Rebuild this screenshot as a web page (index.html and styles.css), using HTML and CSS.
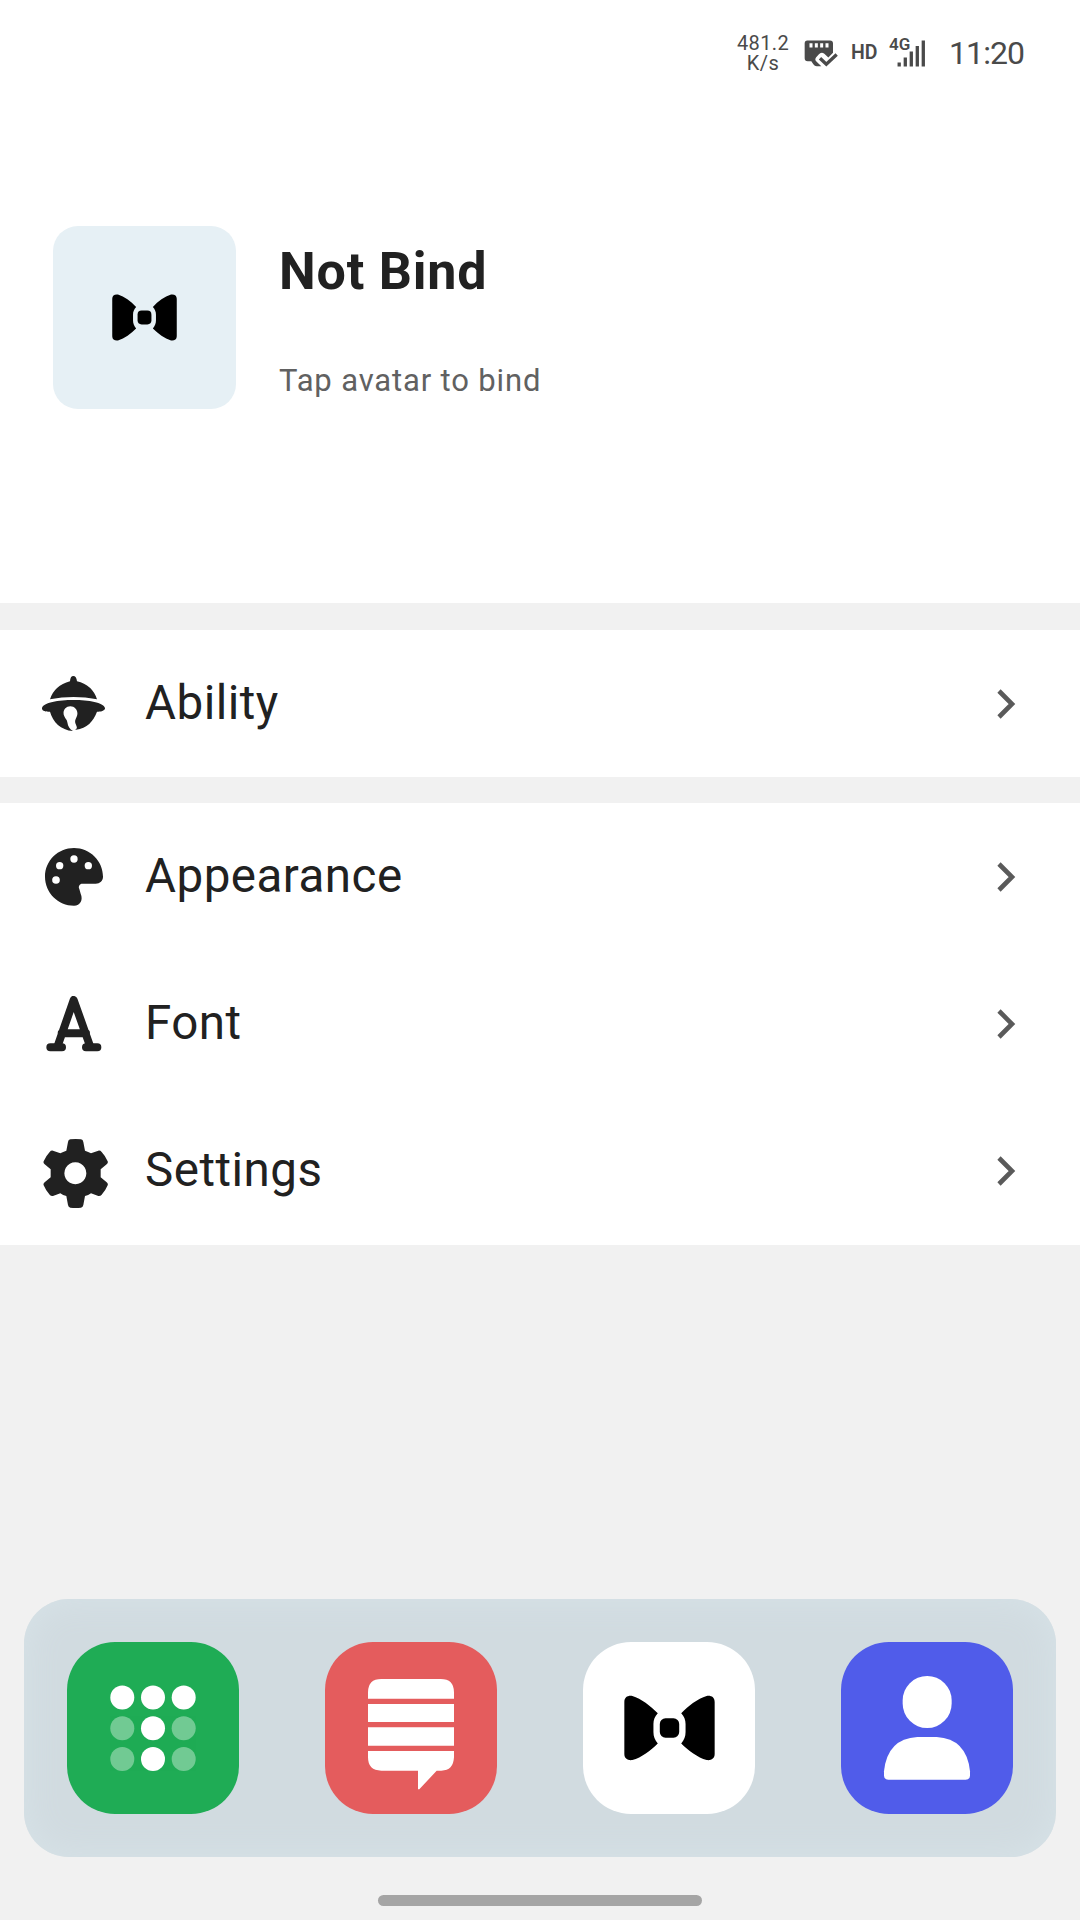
FILE: index.html
```html
<!DOCTYPE html>
<html lang="en">
<head>
<meta charset="UTF-8">
<title>Profile</title>
<link rel="stylesheet" href="styles.css">
</head>
<body>
<!-- shared icons -->
<svg class="defs" width="0" height="0">
  <symbol id="bow" viewBox="192 287 272 196">
    <path d="M193 307c0-14 10-20 24-18 27 9 53 28 76 52-9 10-13 20-13 32v24c0 13 4 24 13 34-22 22-48 41-76 50-13 2-24-4-24-18z"/>
    <path d="M463 307c0-14-10-20-24-18-27 9-54 28-76 52 9 10 13 20 13 32v24c0 13-4 24-13 34 22 22 49 41 76 50 13 2 24-4 24-18z"/>
    <rect x="299" y="356" width="58" height="58" rx="17"/>
  </symbol>
  <symbol id="arrow" viewBox="0 0 20 32">
    <path d="M3 3l13 13L3 29" fill="none" stroke="#5a5a5a" stroke-width="4.6"/>
  </symbol>
</svg>
<div class="page">
  <header class="profile">
    <div class="status">
      <div class="speed"><div>481.2</div><div>K/s</div></div>
      <svg class="card" viewBox="250 57 102 80">
        <path d="M260 58h68q9 0 9 9v28l-14 14-12-11q-9-7-17 2l-8 9q-5 7 2 13l14 13h-14q-6 0-10-6l-6-9h-11q-9 0-9-9V67q0-9 8-9z" fill="#4a4a4a"/>
        <path d="M271 66v13M287 66v13M303 66v13M319 66v13" stroke="#fff" stroke-width="9"/>
        <path d="M298 111l19 18 31-29" fill="none" stroke="#4a4a4a" stroke-width="10"/>
      </svg>
      <div class="hd">HD</div>
      <div class="signal">
        <span class="net">4G</span>
        <svg class="bars" viewBox="0 0 28 27"><path d="M2.2 22.5v4M8.3 17.5v9M14.3 11.5v15M20.3 6v20.5M26.3 0.500v26" fill="none" stroke="#4a4a4a" stroke-width="3.300"/></svg>
      </div>
      <div class="time">11:20</div>
    </div>
    <div class="user">
      <div class="avatar"><svg width="65" height="47"><use href="#bow"/></svg></div>
      <div class="info">
        <h1>Not Bind</h1>
        <p>Tap avatar to bind</p>
      </div>
    </div>
  </header>

  <!-- menu -->
  <section class="group">
    <div class="row">
      <svg class="icon" width="63" height="55" viewBox="36 258 189 165">
        <path d="M60 328q13-41 60-54 1-16 10-16t11 16q46 11 60 54-70-14-141 0z"/>
        <path fill-rule="evenodd" d="M36 354c8-32 181-32 189 0 1 8-11 12-24 11-11 29-30 50-63 54l-3 0c9-4 5-9 2-17-4-9 0-15 3-22 7-14-3-31-19-31s-25 16-18 30c3 8 8 10 9 18 2 13 7 21 17 26-37-3-60-27-69-58-14 0-25-3-24-11z"/>
      </svg>
      <span class="label">Ability</span>
      <svg class="arrow"><use href="#arrow"/></svg>
    </div>
  </section>
  <section class="group">
    <div class="row">
      <svg class="icon" width="58" height="58" viewBox="44 203 174 174">
        <path fill-rule="evenodd" d="M131 203c48 0 87 39 87 86 0 12-9 21-22 21h-40c-8 0-13 8-9 16l4 14c8 18-1 36-20 36-48 0-87-39-87-87s39-86 87-86z"/>
        <g fill="#fff"><circle cx="131" cy="236" r="11"/><circle cx="88" cy="256" r="11"/><circle cx="174" cy="256" r="11"/><circle cx="77" cy="299" r="11.500"/></g>
      </svg>
      <span class="label">Appearance</span>
      <svg class="arrow"><use href="#arrow"/></svg>
    </div>
    <div class="row">
      <svg class="icon" width="56" height="56" viewBox="47 47 168 168">
        <g fill="none" stroke="#212121" stroke-width="24" stroke-linecap="round" stroke-linejoin="round">
          <path d="M82 197l48-138 49 138M94 159h73"/>
          <path d="M60 201h35M167 201h34"/>
        </g>
      </svg>
      <span class="label">Font</span>
      <svg class="arrow"><use href="#arrow"/></svg>
    </div>
    <div class="row">
      <svg class="icon gear" width="65" height="69" viewBox="41 477 195 207">
        <path fill-rule="evenodd" d="M123 478q16-2 32 0 6 1 7 8l5 26q10 4 18 8l22-8q6-1 10 4 12 13 18 28 2 5-3 9l-18 15v24l18 15q5 4 3 9-6 15-18 28-4 5-10 4l-22-8q-8 6-18 8l-5 27q-1 7-7 8-16 2-32 0-6-1-7-8l-5-27q-10-2-18-8l-22 8q-6 1-10-4-12-13-18-28-2-5 3-9l18-15v-24l-18-15q-5-4-3-9 6-15 18-28 4-5 10-4l22 8q8-4 18-8l5-26q1-7 7-8zM138 547a33 33 0 1 0 .1 0z"/>
      </svg>
      <span class="label">Settings</span>
      <svg class="arrow"><use href="#arrow"/></svg>
    </div>
  </section>

  <!-- bottom dock -->
  <nav class="dock">
    <div class="app green">
      <svg viewBox="0 0 172 172" fill="#fff">
        <circle cx="55.300" cy="55.500" r="12"/><circle cx="86" cy="55.500" r="12"/><circle cx="116.700" cy="55.500" r="12"/>
        <circle cx="86" cy="86.200" r="12"/><circle cx="86" cy="117" r="12"/>
        <g opacity=".37"><circle cx="55.300" cy="86.200" r="12"/><circle cx="116.700" cy="86.200" r="12"/><circle cx="55.300" cy="117" r="12"/><circle cx="116.700" cy="117" r="12"/></g>
      </svg>
    </div>
    <div class="app red">
      <svg viewBox="75 126 516 516" fill="#fff">
        <path d="M204 296v-19q0-40 40-40h178q40 0 40 40v19zM204 312h258v54H204zM204 382h258v55H204zM204 453h258v19q-2 40-38 40h-14l-52 56h-4v-56H244q-40 0-40-40z"/>
      </svg>
    </div>
    <div class="app white"><svg class="tie"><use href="#bow"/></svg></div>
    <div class="app blue">
      <svg viewBox="93 186 516 516" fill="#fff">
        <rect x="278" y="288" width="147" height="156" rx="73.500"/>
        <path d="M222 586v-12q10-98 100-103h58q90 5 100 103v12q0 13-13 13H235q-13 0-13-13z"/>
      </svg>
    </div>
  </nav>
  <div class="home"></div>
</div>
</body>
</html>
```
FILE: styles.css
```css
* {
	box-sizing: border-box;
}
body {
	margin: 0;
	background-color: #f1f1f1;
	font-family: Roboto, "Liberation Sans", sans-serif;
	color: #212121;
}
.defs {
	display: block;
}
svg {
	display: block;
	flex: none;
}
.page {
	height: 1920px;
	display: flex;
	flex-direction: column;
	overflow: hidden;
}
.profile {
	height: 603px;
	background-color: #fff;
}
/*状态栏*/
.status {
	height: 106px;
	padding-right: 54px;
	display: flex;
	justify-content: flex-end;
	align-items: center;
	color: #4a4a4a;
}
.speed {
	width: 54px;
	text-align: center;
	font-size: 20px;
	line-height: 19.5px;
	letter-spacing: 0.4px;
	margin-top: 1px;
	margin-right: 14px;
}
.card {
	width: 34px;
	height: 27px;
	margin-right: 13px;
}
.hd {
	width: 28px;
	font-size: 19.5px;
	font-weight: 600;
	margin-top: -2px;
	margin-right: 10px;
}
.signal {
	width: 38px;
	height: 30px;
	position: relative;
	margin-right: 22px;
}
.net {
	position: absolute;
	left: 0;
	top: -2px;
	font-size: 17px;
	line-height: 16px;
	font-weight: 600;
}
.bars {
	position: absolute;
	left: 8px;
	top: 2px;
	width: 28px;
	height: 27px;
}
.time {
	width: 77px;
	font-size: 32px;
	letter-spacing: -0.9px;
	white-space: nowrap;
}
/*用户信息*/
.user {
	display: flex;
	padding: 120px 53px 0;
}
.avatar {
	width: 183px;
	height: 183px;
	border-radius: 25px;
	background-color: #e6f0f5;
	display: flex;
	align-items: center;
	justify-content: center;
}
.info {
	margin-left: 43px;
}
.info h1 {
	margin: 15px 0 0;
	font-size: 52px;
	line-height: 61px;
	font-weight: 700;
	letter-spacing: 0.8px;
}
.info p {
	margin: 60px 0 0;
	font-size: 31px;
	line-height: 37px;
	letter-spacing: 0.85px;
	color: #616161;
}
/*菜单*/
.group {
	margin-top: 27px;
	background-color: #fff;
}
.group + .group {
	margin-top: 26px;
}
.row {
	height: 147px;
	display: grid;
	grid-template-columns: 145px 1fr 84px;
	align-items: center;
}
.group + .group .row {
	height: 147.3px;
}
.icon {
	justify-self: center;
	margin-left: 2px;
	fill: #212121;
}
.gear {
	margin-top: 4px;
	margin-left: 6px;
}
.label {
	margin-top: -2px;
	font-size: 47.5px;
	line-height: 56px;
	letter-spacing: 0.5px;
}
.arrow {
	width: 20px;
	height: 32px;
}
/*底部导航*/
.dock {
	margin: auto 24px 0;
	height: 258px;
	padding: 0 43px;
	border-radius: 45px;
	background-color: #d1dbe0;
	box-shadow: inset 0 0 36px #d7e3e8;
	display: flex;
	align-items: center;
	justify-content: space-between;
}
.app {
	width: 172px;
	height: 172px;
	border-radius: 48px;
	overflow: hidden;
	display: flex;
	align-items: center;
	justify-content: center;
}
.app svg {
	width: 172px;
	height: 172px;
}
.app .tie {
	width: 91px;
	height: 66px;
}
.green {
	background-color: #1fac55;
}
.red {
	background-color: #e45c5d;
}
.white {
	background-color: #fff;
}
.blue {
	background-color: #505cea;
}
.home {
	width: 324px;
	height: 11px;
	margin: 38px auto 14px;
	border-radius: 6px;
	background-color: #a5a5a5;
}
```
